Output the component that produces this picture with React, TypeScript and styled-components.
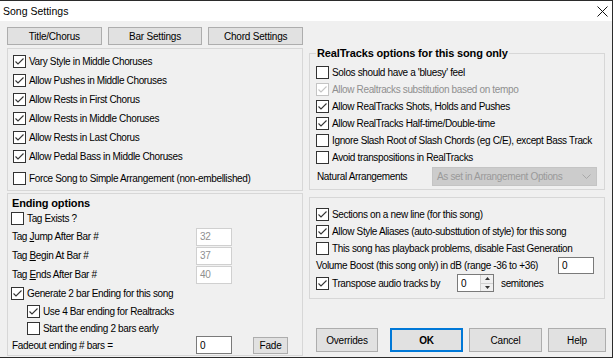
import React from 'react';
import styled, { createGlobalStyle } from 'styled-components';

const GlobalStyle = createGlobalStyle`
  html, body { margin: 0; padding: 0; background: #ffffff; }
  body { font-family: "Liberation Sans", Arial, sans-serif; }
  * { box-sizing: border-box; }
`;

const Window = styled.div`
  width: 613px;
  height: 358px;
  border: 1px solid #2b2b2b;
  border-left: none;
  background: #f0f0f0;
  display: flex;
  flex-direction: column;
  font-size: 10px;
  letter-spacing: -0.35px;
  color: #000;
  overflow: hidden;
`;

const TitleBar = styled.div`
  height: 20px;
  flex: none;
  background: #ffffff;
  display: flex;
  align-items: center;
  justify-content: space-between;
  padding: 0 4px 0 3px;
  font-size: 10.5px;
  letter-spacing: 0;
  color: #000;
`;

const Body = styled.div`
  flex: 1;
  display: flex;
  gap: 6px;
  padding: 6px 0 0 7px;
`;

const LeftColumn = styled.div`
  width: 296px;
  display: flex;
  flex-direction: column;
`;

const RightColumn = styled.div`
  width: 296px;
  display: flex;
  flex-direction: column;
  padding-top: 20px;
`;

const TabRow = styled.div`
  display: grid;
  grid-template-columns: repeat(3, 1fr);
  gap: 6px;
  height: 18px;
`;

const Button = styled.button<{ $primary?: boolean; $w?: number }>`
  font-family: inherit;
  font-size: 10px;
  letter-spacing: -0.2px;
  font-weight: ${p => (p.$primary ? 700 : 400)};
  color: #000;
  background: #e1e1e1;
  border: ${p => (p.$primary ? '2px solid #0078d7' : '1px solid #adadad')};
  padding: 0;
  margin: 0;
  height: 100%;
  width: ${p => (p.$w ? `${p.$w}px` : 'auto')};
`;

const GroupBox = styled.div<{ $h: number; $mt: number; $pl: number }>`
  height: ${p => p.$h}px;
  margin-top: ${p => p.$mt}px;
  border: 1px solid #d7d7d7;
  padding: 3px 4px 0 ${p => p.$pl}px;
  display: flex;
  flex-direction: column;
`;

const Fieldset = styled.fieldset`
  margin: 0;
  height: 143px;
  border: 1px solid #d7d7d7;
  padding: 5px 6px 0 6px;
  min-width: 0;
`;

const Legend = styled.legend`
  font-weight: 700;
  font-size: 11px;
  letter-spacing: -0.15px;
  line-height: 12px;
  padding: 0 1px;
`;

const PlainBox = styled.div`
  height: 102px;
  margin-top: 7px;
  border: 1px solid #d7d7d7;
  padding: 8px 6px 0 6px;
`;

const SectionTitle = styled.div`
  height: 12px;
  line-height: 12px;
  font-weight: 700;
  font-size: 11px;
  letter-spacing: -0.15px;
  padding-left: 1px;
`;

const Row = styled.div<{ $h?: number; $indent?: number; $mt?: number }>`
  display: flex;
  align-items: center;
  height: ${p => p.$h ?? 19}px;
  padding-left: ${p => p.$indent ?? 0}px;
  margin-top: ${p => p.$mt ?? 0}px;
  white-space: nowrap;
  flex: none;
`;

const Box = styled.span<{ $disabled?: boolean }>`
  width: 13px;
  height: 13px;
  flex: none;
  border: 1px solid ${p => (p.$disabled ? '#c4c4c4' : '#333333')};
  background: #ffffff;
  margin-right: 3px;
  display: flex;
  align-items: center;
  justify-content: center;
`;

const Label = styled.span<{ $disabled?: boolean; $w?: number }>`
  color: ${p => (p.$disabled ? '#8f8f8f' : '#000')};
  width: ${p => (p.$w ? `${p.$w}px` : 'auto')};
  flex: none;
`;

const TextInput = styled.div<{ $w: number; $disabled?: boolean; $h?: number }>`
  width: ${p => p.$w}px;
  height: ${p => p.$h ?? 18}px;
  background: #ffffff;
  border: 1px solid ${p => (p.$disabled ? '#d0d0d0' : '#7a7a7a')};
  color: ${p => (p.$disabled ? '#8f8f8f' : '#000')};
  display: flex;
  align-items: center;
  padding-left: 3px;
  flex: none;
`;

const Spin = styled.div`
  width: 37px;
  height: 18px;
  background: #ffffff;
  border: 1px solid #7a7a7a;
  display: flex;
  flex: none;
`;

const SpinValue = styled.span`
  flex: 1;
  display: flex;
  align-items: center;
  padding-left: 3px;
`;

const SpinArrows = styled.span`
  width: 13px;
  border-left: 1px solid #d0d0d0;
  display: flex;
  flex-direction: column;
  background: #f0f0f0;
`;

const SpinHalf = styled.span<{ $top?: boolean }>`
  flex: 1;
  display: flex;
  align-items: center;
  justify-content: center;
  border-bottom: ${p => (p.$top ? '1px solid #d0d0d0' : 'none')};
`;

const Select = styled.div`
  width: 165px;
  height: 19px;
  margin-left: auto;
  margin-right: 1px;
  background: #cccccc;
  border: 1px solid #c4c4c4;
  color: #9a9a9a;
  display: flex;
  align-items: center;
  justify-content: space-between;
  padding: 0 5px 0 4px;
`;

const ButtonRow = styled.div`
  display: flex;
  height: 24px;
  margin-top: 29px;
  margin-right: -3px;
  padding-left: 7px;
  gap: 6px;
`;

const Check = ({ on = true, disabled = false }: { on?: boolean; disabled?: boolean }) => (
  <Box $disabled={disabled}>
    {on && (
      <svg width="11" height="11" viewBox="0 0 11 11">
        <polyline
          points="1.5,5.5 4,8 9.5,2.5"
          fill="none"
          stroke={disabled ? '#c4c4c4' : '#333'}
          strokeWidth="1.1"
        />
      </svg>
    )}
  </Box>
);

type CheckItem = { label: string; on?: boolean; disabled?: boolean };

const CheckRow = ({ label, on, disabled, h, indent, mt }: CheckItem & { h?: number; indent?: number; mt?: number }) => (
  <Row $h={h} $indent={indent} $mt={mt}>
    <Check on={on} disabled={disabled} />
    <Label $disabled={disabled}>{label}</Label>
  </Row>
);

const styleOptions: CheckItem[] = [
  { label: 'Vary Style in Middle Choruses', on: true },
  { label: 'Allow Pushes in Middle Choruses', on: true },
  { label: 'Allow Rests in First Chorus', on: true },
  { label: 'Allow Rests in Middle Choruses', on: true },
  { label: 'Allow Rests in Last Chorus', on: true },
  { label: 'Allow Pedal Bass in Middle Choruses', on: true },
];

const realTracks: CheckItem[] = [
  { label: "Solos should have a 'bluesy' feel", on: false },
  { label: 'Allow Realtracks substitution based on tempo', on: true, disabled: true },
  { label: 'Allow RealTracks Shots, Holds and Pushes', on: true },
  { label: 'Allow RealTracks Half-time/Double-time', on: true },
  { label: 'Ignore Slash Root of Slash Chords (eg C/E), except Bass Track', on: false },
  { label: 'Avoid transpositions in RealTracks', on: false },
];

export default function App() {
  return (
    <>
      <GlobalStyle />
      <Window>
        <TitleBar>
          <span>Song Settings</span>
          <svg width="11" height="11" viewBox="0 0 11 11">
            <path d="M0.5 0.5 L10.5 10.5 M10.5 0.5 L0.5 10.5" stroke="#111" strokeWidth="1" />
          </svg>
        </TitleBar>
        <Body>
          <LeftColumn>
            <TabRow>
              <Button>Title/Chorus</Button>
              <Button>Bar Settings</Button>
              <Button>Chord Settings</Button>
            </TabRow>
            <GroupBox $h={143} $mt={3} $pl={5}>
              {styleOptions.map(o => (
                <CheckRow key={o.label} {...o} />
              ))}
              <CheckRow label="Force Song to Simple Arrangement (non-embellished)" on={false} mt={3} />
            </GroupBox>
            <GroupBox $h={163} $mt={2} $pl={3}>
              <SectionTitle>Ending options</SectionTitle>
              <CheckRow label="Tag Exists ?" on={false} h={18} />
              <Row $h={19} $indent={1}>
                <Label $w={184}>Tag <u>J</u>ump After Bar #</Label>
                <TextInput $w={36} $disabled>32</TextInput>
              </Row>
              <Row $h={19} $indent={1}>
                <Label $w={184}>Tag <u>B</u>egin At Bar #</Label>
                <TextInput $w={36} $disabled>37</TextInput>
              </Row>
              <Row $h={19} $indent={1}>
                <Label $w={184}>Tag <u>E</u>nds After Bar #</Label>
                <TextInput $w={36} $disabled>40</TextInput>
              </Row>
              <CheckRow label="Generate 2 bar Ending for this song" h={18} />
              <CheckRow label="Use 4 Bar ending for Realtracks" h={18} indent={16} />
              <CheckRow label="Start the ending 2 bars early" on={false} h={16} indent={16} />
              <Row $h={18} $indent={1}>
                <Label $w={184}>Fadeout ending # bars =</Label>
                <TextInput $w={36} $h={18}>0</TextInput>
                <Button $w={35} style={{ height: 17, marginLeft: 21 }}>Fade</Button>
              </Row>
            </GroupBox>
          </LeftColumn>
          <RightColumn>
            <Fieldset>
              <Legend>RealTracks options for this song only</Legend>
              {realTracks.map(o => (
                <CheckRow key={o.label} {...o} h={17} />
              ))}
              <Row $h={19} $mt={1} $indent={1}>
                <Label>Natural Arrangements</Label>
                <Select>
                  <span>As set in Arrangement Options</span>
                  <svg width="9" height="6" viewBox="0 0 9 6">
                    <polyline points="0.5,0.5 4.5,4.5 8.5,0.5" fill="none" stroke="#a8a8a8" strokeWidth="1" />
                  </svg>
                </Select>
              </Row>
            </Fieldset>
            <PlainBox>
              <CheckRow label="Sections on a new line (for this song)" h={17} />
              <CheckRow label="Allow Style Aliases (auto-substtution of style) for this song" h={17} />
              <CheckRow label="This song has playback problems, disable Fast Generation" on={false} h={17} />
              <Row $h={17}>
                <Label $w={242}>Volume Boost (this song only) in dB (range -36 to +36)</Label>
                <TextInput $w={36} $h={17}>0</TextInput>
              </Row>
              <Row $h={18}>
                <Check />
                <Label $w={125}>Transpose audio tracks by</Label>
                <Spin>
                  <SpinValue>0</SpinValue>
                  <SpinArrows>
                    <SpinHalf $top>
                      <svg width="5" height="3" viewBox="0 0 5 3"><polygon points="0,3 2.5,0 5,3" fill="#333" /></svg>
                    </SpinHalf>
                    <SpinHalf>
                      <svg width="5" height="3" viewBox="0 0 5 3"><polygon points="0,0 2.5,3 5,0" fill="#333" /></svg>
                    </SpinHalf>
                  </SpinArrows>
                </Spin>
                <Label style={{ marginLeft: 7 }}>semitones</Label>
              </Row>
            </PlainBox>
            <ButtonRow>
              <Button $w={62}>Overrides</Button>
              <Button $w={73} $primary style={{ marginLeft: 6 }}>OK</Button>
              <Button $w={73}>Cancel</Button>
              <Button $w={58}>Help</Button>
            </ButtonRow>
          </RightColumn>
        </Body>
      </Window>
    </>
  );
}
